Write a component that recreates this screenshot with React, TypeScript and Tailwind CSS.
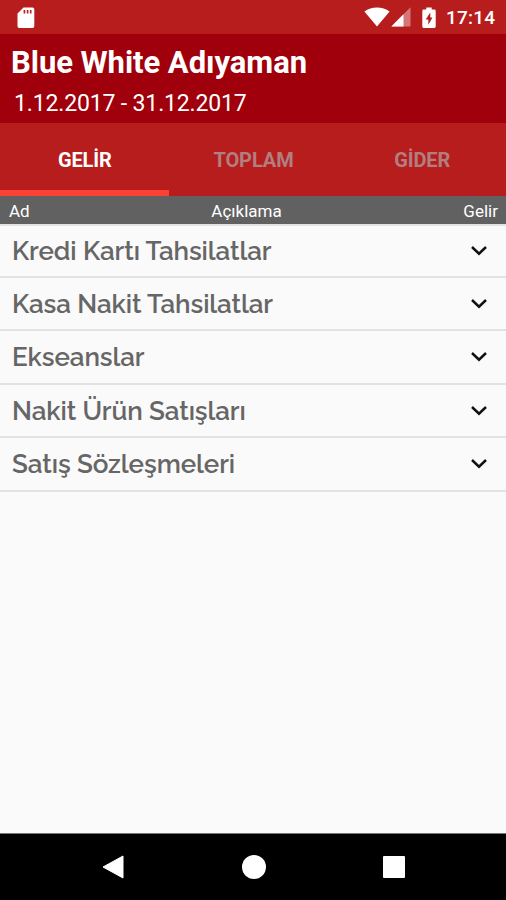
interface Row {
  title: string;
  className: string;
}

// rows are 53.4px apart, so their heights alternate
const rows: Row[] = [
  { title: 'Kredi Kartı Tahsilatlar', className: 'h-[52px]' },
  { title: 'Kasa Nakit Tahsilatlar', className: 'h-[53px] pt-px' },
  { title: 'Ekseanslar', className: 'h-[54px]' },
  { title: 'Nakit Ürün Satışları', className: 'h-[53px] pt-px' },
  { title: 'Satış Sözleşmeleri', className: 'h-[54px]' },
];

const tabs = [
  { label: 'GELİR', active: true },
  { label: 'TOPLAM', active: false },
  { label: 'GİDER', active: false },
];

function StatusBar() {
  return (
    <div className="flex h-[34px] items-center bg-[#b71d1d] pl-[17px] pr-[9px]">
      <svg width="18" height="22" viewBox="0 0 18 22" className="mt-px">
        <path
          fillRule="evenodd"
          fill="#fff"
          d="M6.5.5H15.5Q17.3.5 17.3 2.3V19.2Q17.3 21 15.5 21H2.3Q.5 21 .5 19.2V6.5ZM6.6 3V6.4H8.3V3ZM9.8 3V6.4H11.4V3ZM12.9 3V6.4H14.5V3Z"
        />
      </svg>
      <svg width="26" height="20" viewBox="0 0 26 20" className="ml-auto">
        <path fill="#fff" d="M13 19.4.4 4.6Q6 .4 13 .4T25.6 4.6Z" />
      </svg>
      <svg width="20" height="20" viewBox="0 0 20 20" className="ml-px">
        <path fill="#fff" fillOpacity="0.4" d="M19.5.3V19.5H.3Z" />
        <path fill="#fff" d="M12.5 7.3V19.5H.3Z" />
      </svg>
      <svg width="14" height="22" viewBox="0 0 14 22" className="ml-[11px] mt-px">
        <path
          fillRule="evenodd"
          fill="#fff"
          d="M4.3.5H9.7V2.5H12.3Q13.7 2.5 13.7 3.9V19.6Q13.7 21 12.3 21H1.7Q.3 21 .3 19.6V3.9Q.3 2.5 1.7 2.5H4.3ZM8.3 5.5 3.7 12.5H6.3V17.7L10.5 10.5H8.3Z"
        />
      </svg>
      <span className="ml-[10px] mt-[2px] w-[51px] whitespace-nowrap text-[19px] font-medium leading-[22px] tracking-[0.2px] text-white">
        17:14
      </span>
    </div>
  );
}

function Chevron() {
  return (
    <svg width="18" height="12" viewBox="0 0 18 12" className="shrink-0">
      <path d="M2 2 9 8.7 16 2" fill="none" stroke="#111" strokeWidth="2.5" />
    </svg>
  );
}

export default function App() {
  return (
    <div className="flex h-[900px] w-[506px] flex-col overflow-hidden bg-[#fafafa] font-['Roboto',sans-serif]">
      <StatusBar />
      <header className="h-[89px] bg-[#9f000b] text-white">
        <h1 className="whitespace-nowrap pl-[11px] pt-[10px] text-[31px] font-bold leading-[38px] tracking-[-0.05px]">
          Blue White Adıyaman
        </h1>
        <p className="whitespace-nowrap pl-[14px] pt-[8px] text-[23px] leading-[28px] tracking-[-0.15px]">
          1.12.2017 - 31.12.2017
        </p>
      </header>
      <nav className="grid h-[73px] grid-cols-3 bg-[#b71d1d]">
        {tabs.map((tab) => (
          <div
            key={tab.label}
            className={
              tab.active
                ? 'flex items-center justify-center border-b-[6px] border-[#fa4234] pl-px pt-[7px] text-[20px] font-bold tracking-[-0.1px] text-white'
                : 'flex items-center justify-center border-b-[6px] border-transparent pl-px pt-[7px] text-[20px] font-bold tracking-[-0.1px] text-[#b17f7f]'
            }
          >
            {tab.label}
          </div>
        ))}
      </nav>
      <div className="flex h-[28px] items-center justify-between bg-[#616161] pl-[9px] pr-[8px] pt-[3px] text-[17px] text-white">
        <span>Ad</span>
        <span>Açıklama</span>
        <span>Gelir</span>
      </div>
      <main className="grow border-t-2 border-[#e2e2e2]">
        {rows.map((row) => (
          <div
            key={row.title}
            className={`flex items-center justify-between border-b-2 border-[#e2e2e2] pl-[12px] pr-[18px] ${row.className}`}
          >
            <span className="whitespace-nowrap font-['Raleway','Lato',sans-serif] text-[26px] font-semibold tracking-[-0.08px] text-[#666]">
              {row.title}
            </span>
            <Chevron />
          </div>
        ))}
      </main>
      <footer className="flex h-[67px] items-center justify-between border-t border-[#777] bg-black pl-[102px] pr-[101px]">
        <svg width="22" height="24" viewBox="0 0 22 24">
          <path d="M21 1V23L1 12Z" fill="#fff" stroke="#fff" strokeLinejoin="round" />
        </svg>
        <div className="size-[24px] rounded-full bg-white" />
        <div className="size-[22px] rounded-[1px] bg-white" />
      </footer>
    </div>
  );
}
